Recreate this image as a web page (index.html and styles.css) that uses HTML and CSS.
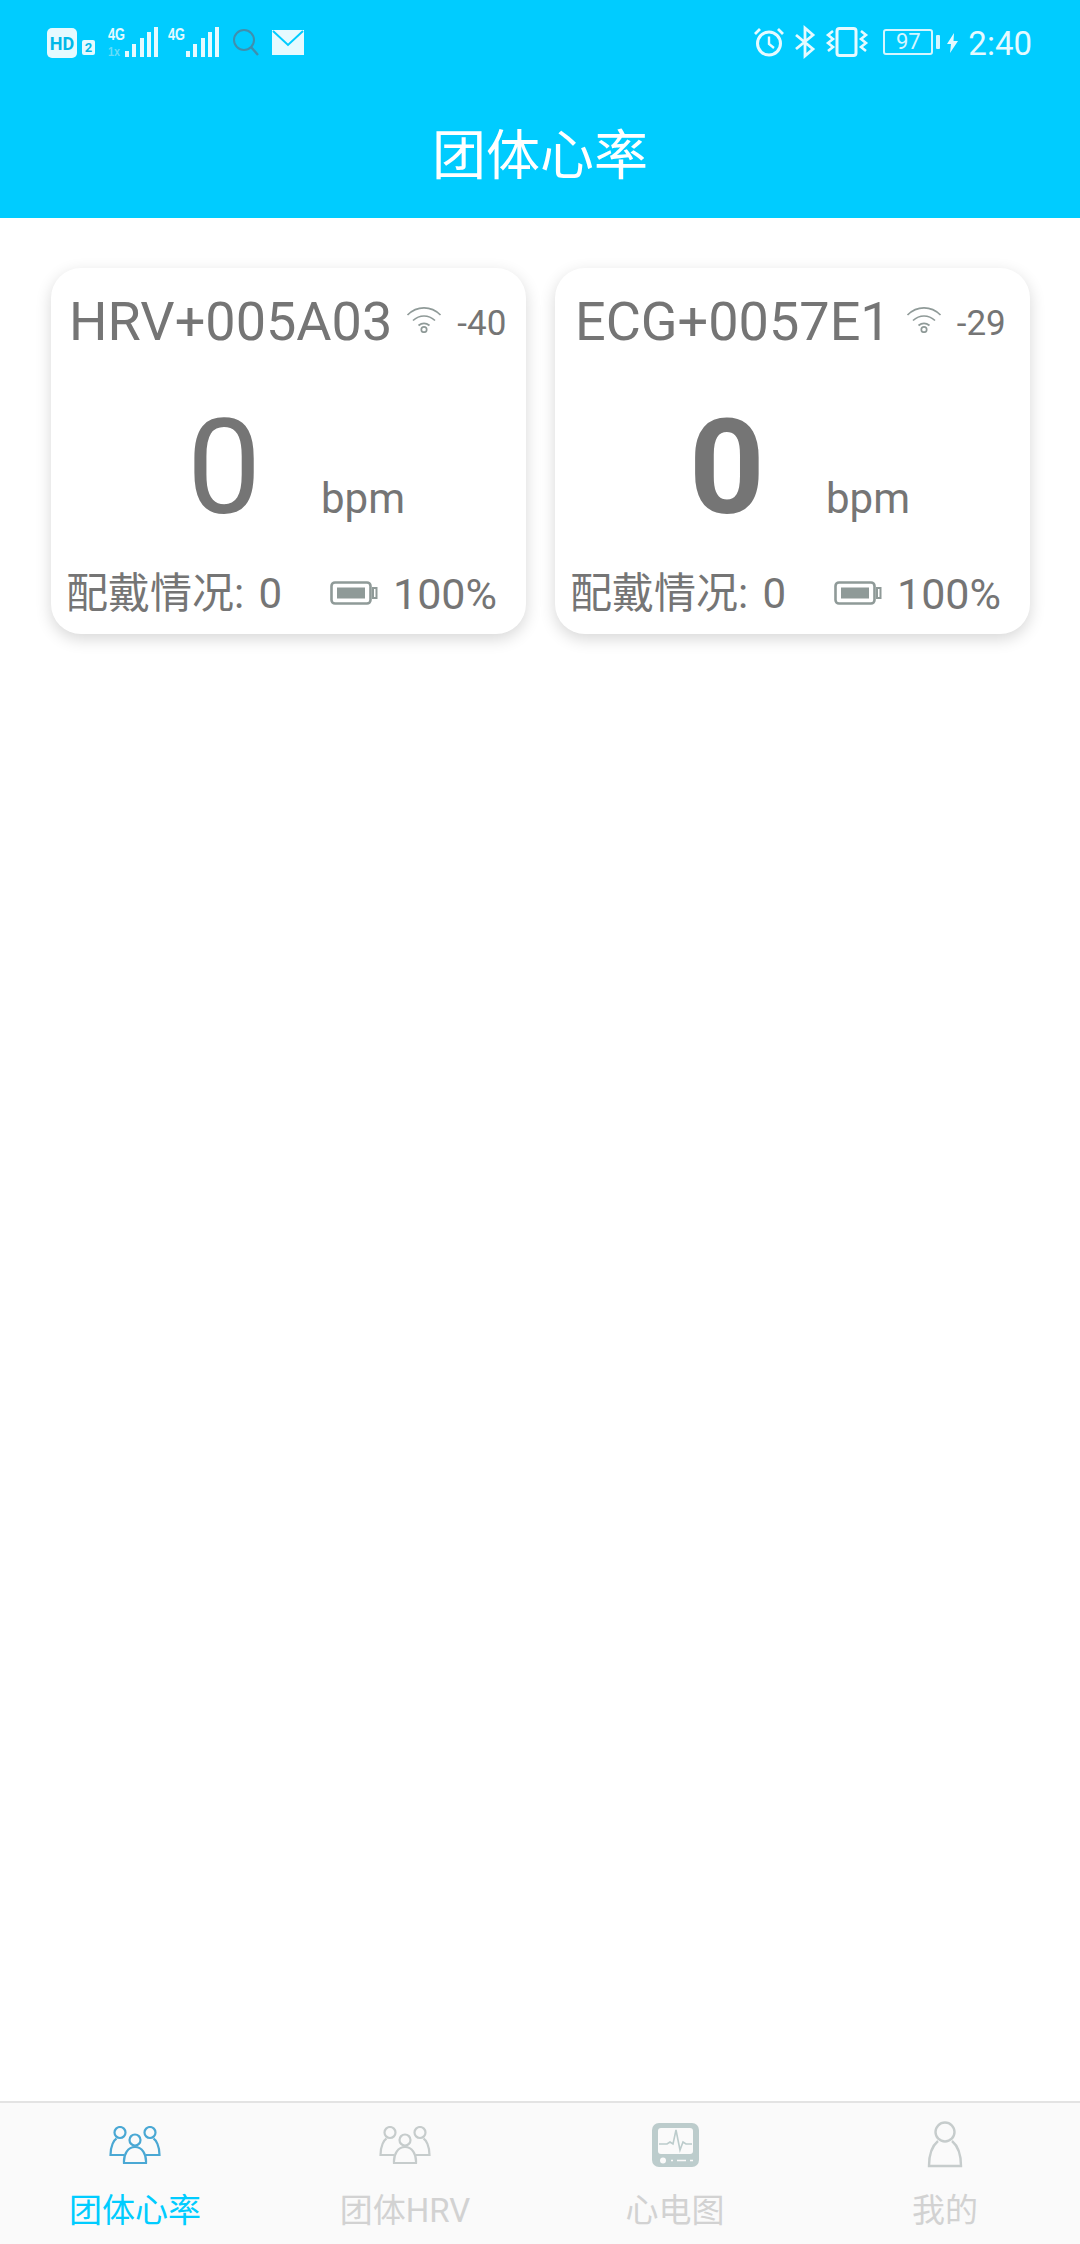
FILE: index.html
```html
<!DOCTYPE html>
<html lang="zh-CN">
<head>
<meta charset="utf-8">
<title>团体心率</title>
<link rel="stylesheet" href="styles.css">
</head>
<body>
<div class="app">
  <header class="header">
    <div class="statusbar">
      <div class="status-group left">
        <svg class="i-hd" viewBox="0 0 48 30" width="48" height="30"><rect x="0" y="0" width="30" height="30" rx="5" fill="#e6faff"/><text x="15" y="21.500" class="hd-text" text-anchor="middle">HD</text><rect x="35" y="12" width="13" height="15" rx="2" fill="#e6faff"/><text x="41.500" y="24" class="hd2-text" text-anchor="middle">2</text></svg>
        <svg class="i-sig first" viewBox="0 0 51 32" width="51" height="32"><text x="0" y="14" class="sig-text" textLength="17" lengthAdjust="spacingAndGlyphs">4G</text><text x="0" y="30" class="sig-faint" textLength="12" lengthAdjust="spacingAndGlyphs">1x</text><g fill="#e6faff"><rect x="17" y="25" width="4" height="6"/><rect x="24" y="18" width="4" height="13"/><rect x="32" y="12" width="4" height="19"/><rect x="39" y="6" width="4" height="25"/><rect x="46" y="1" width="4" height="30"/></g></svg>
        <svg class="i-sig second" viewBox="0 0 51 32" width="51" height="32"><text x="0" y="14" class="sig-text" textLength="17" lengthAdjust="spacingAndGlyphs">4G</text><g fill="#e6faff"><rect x="18" y="25" width="4" height="6"/><rect x="25" y="18" width="4" height="13"/><rect x="33" y="12" width="4" height="19"/><rect x="40" y="6" width="4" height="25"/><rect x="47" y="1" width="4" height="30"/></g></svg>
        <svg class="i-search" viewBox="0 0 27 29" width="27" height="29"><circle cx="12" cy="12" r="10" fill="none" stroke="#3f8fae" stroke-width="2"/><path d="M19 19l7 8" stroke="#3f8fae" stroke-width="2.400" fill="none"/></svg>
        <svg class="i-mail" viewBox="0 0 32 25" width="32" height="25"><rect width="32" height="25" fill="#e6faff"/><path d="M1 1l15 14L31 1" fill="none" stroke="#00ccff" stroke-width="2"/></svg>
      </div>
      <div class="status-group right">
        <svg class="i-alarm" viewBox="0 0 30 30" width="30" height="30"><circle cx="15" cy="16.500" r="11.500" fill="none" stroke="#e6faff" stroke-width="3"/><path d="M15 9.500v7.500l5 4" fill="none" stroke="#e6faff" stroke-width="2.400"/><path d="M1 7l5-5M29 7l-5-5" fill="none" stroke="#e6faff" stroke-width="2.800"/></svg>
        <svg class="i-bt" viewBox="0 0 20 32" width="20" height="32"><path d="M1 9l17 14-8 7V2l8 7L1 23" fill="none" stroke="#e6faff" stroke-width="2.800"/></svg>
        <svg class="i-vib" viewBox="0 0 42 30" width="42" height="30"><rect x="11" y="1.500" width="19" height="27" rx="2.500" fill="none" stroke="#e6faff" stroke-width="3"/><path d="M7 4L2 8l5 4-5 4 5 4-5 4M35 4l5 4-5 4 5 4-5 4 5 4" fill="none" stroke="#e6faff" stroke-width="2.600"/></svg>
        <div class="batt"><span class="batt-box">97</span><span class="batt-nub"></span></div>
        <svg class="i-bolt" viewBox="0 0 11 20" width="11" height="20"><path d="M7 0L0 11h4l-1 9 8-12H6.500z" fill="#e6faff"/></svg>
        <span class="time">2:40</span>
      </div>
    </div>
    <h1 class="title">团体心率</h1>
  </header>

  <main class="content">
    <section class="card card-a">
      <div class="card-top">
        <span class="dev-name">HRV+005A03</span>
        <svg class="wifi" viewBox="0 0 36 28" width="36" height="28"><path d="M1.500 10C11 .5 25 .5 34.500 10M7 15.500c6.500-6 15.500-6 22 0M12.500 20.500c3.500-2.800 7.500-2.800 11 0" fill="none" stroke="#8f9a98" stroke-width="1.700"/><circle cx="18" cy="24.500" r="2.700" fill="none" stroke="#8f9a98" stroke-width="1.700"/></svg>
        <span class="rssi">-40</span>
      </div>
      <div class="card-mid">
        <span class="rate">0</span>
        <span class="unit">bpm</span>
      </div>
      <div class="card-foot">
        <span class="wear">配戴情况: 0</span>
        <svg class="battery" viewBox="0 0 48 24" width="48" height="24"><rect x="1.500" y="1.500" width="39" height="21" rx="3.500" fill="none" stroke="#8f9a98" stroke-width="2.600"/><rect x="7" y="6.500" width="28" height="11" fill="#8f9a98"/><path d="M43 7h3.500v10H43z" fill="none" stroke="#8f9a98" stroke-width="2"/></svg>
        <span class="pct">100%</span>
      </div>
    </section>
    <section class="card card-b">
      <div class="card-top">
        <span class="dev-name">ECG+0057E1</span>
        <svg class="wifi" viewBox="0 0 36 28" width="36" height="28"><path d="M1.500 10C11 .5 25 .5 34.500 10M7 15.500c6.500-6 15.500-6 22 0M12.500 20.500c3.500-2.800 7.500-2.800 11 0" fill="none" stroke="#8f9a98" stroke-width="1.700"/><circle cx="18" cy="24.500" r="2.700" fill="none" stroke="#8f9a98" stroke-width="1.700"/></svg>
        <span class="rssi">-29</span>
      </div>
      <div class="card-mid">
        <span class="rate bold">0</span>
        <span class="unit">bpm</span>
      </div>
      <div class="card-foot">
        <span class="wear">配戴情况: 0</span>
        <svg class="battery" viewBox="0 0 48 24" width="48" height="24"><rect x="1.500" y="1.500" width="39" height="21" rx="3.500" fill="none" stroke="#8f9a98" stroke-width="2.600"/><rect x="7" y="6.500" width="28" height="11" fill="#8f9a98"/><path d="M43 7h3.500v10H43z" fill="none" stroke="#8f9a98" stroke-width="2"/></svg>
        <span class="pct">100%</span>
      </div>
    </section>
  </main>

  <nav class="tabbar">
    <div class="tab active">
      <div class="tab-slot"><svg viewBox="0 0 52 38" width="52" height="38"><g fill="none" stroke="#4aa8d4" stroke-width="2.200"><circle cx="11" cy="6.500" r="5.500"/><circle cx="41" cy="6.500" r="5.500"/><circle cx="26" cy="14" r="5.500"/><path d="M15 29H1.500c0-9 3.500-15 6-16.500M37 29h13.500c0-9-3.500-15-6-16.500"/><path d="M15 37c-.500-9 4-16 11-16s11.500 7 11 16z"/></g></svg></div>
      <span class="tab-label">团体心率</span>
    </div>
    <div class="tab">
      <div class="tab-slot"><svg viewBox="0 0 52 38" width="52" height="38"><g fill="none" stroke="#c6cccc" stroke-width="2.200"><circle cx="11" cy="6.500" r="5.500"/><circle cx="41" cy="6.500" r="5.500"/><circle cx="26" cy="14" r="5.500"/><path d="M15 29H1.500c0-9 3.500-15 6-16.500M37 29h13.500c0-9-3.500-15-6-16.500"/><path d="M15 37c-.500-9 4-16 11-16s11.500 7 11 16z"/></g></svg></div>
      <span class="tab-label">团体HRV</span>
    </div>
    <div class="tab">
      <div class="tab-slot"><svg viewBox="0 0 47 44" width="47" height="44"><rect width="47" height="44" rx="7" fill="#bccccc"/><rect x="6" y="5" width="35" height="26" rx="3" fill="#fafafa"/><path d="M7 21h8l3-2 3 2 3-14 4 20 3-8 3 2h6" fill="none" stroke="#bccccc" stroke-width="1.600"/><circle cx="11" cy="37.500" r="3" fill="#fafafa"/><path d="M19 37.500h2M25 37.500h9M38 37.500h3" stroke="#fafafa" stroke-width="1.600"/></svg></div>
      <span class="tab-label">心电图</span>
    </div>
    <div class="tab">
      <div class="tab-slot"><svg viewBox="0 0 36 47" width="36" height="47"><g fill="none" stroke="#c6cccc" stroke-width="2.400"><circle cx="18" cy="11" r="9.500"/><path d="M11 20C5 25 2 32 2 45h32c0-13-3-20-9-25"/></g></svg></div>
      <span class="tab-label">我的</span>
    </div>
  </nav>
</div>
</body>
</html>
```
FILE: styles.css
```css
* { box-sizing: border-box; }
html, body { margin: 0; padding: 0; }
body { background: #fff; font-family: Roboto, "Noto Sans CJK SC", sans-serif; }
.app { width: 1080px; height: 2244px; display: flex; flex-direction: column; overflow: hidden; }

.header { height: 218px; background: #00ccff; flex: none; }
.statusbar { height: 88px; padding: 26px 48px 0 47px; display: flex; justify-content: space-between; align-items: flex-start; }
.status-group { display: flex; align-items: flex-start; }
.status-group svg { display: block; flex: none; overflow: visible; }
.i-hd { margin-top: 2px; }
.i-sig.first { margin-left: 13px; }
.i-sig.second { margin-left: 9px; }
.i-search { margin: 2px 0 0 13px; }
.i-mail { margin: 4px 0 0 13px; }
.hd-text { font: 700 18px Roboto, sans-serif; fill: #00b8e8; }
.hd2-text { font: 700 13px Roboto, sans-serif; fill: #00b8e8; }
.sig-text { font: 700 17px "Liberation Sans", sans-serif; fill: #e6faff; }
.sig-faint { font: 700 12px "Liberation Sans", sans-serif; fill: #66dcf8; }
.i-alarm { margin-top: 1px; }
.i-bt { margin: 0 0 0 11px; }
.i-vib { margin: 1px 0 0 11px; }
.batt { display: flex; align-items: center; margin: 3px 0 0 15px; height: 26px; }
.batt-box { width: 50px; height: 26px; border: 2px solid #d5f6ff; border-radius: 3px; font-size: 22px; line-height: 22px; text-align: center; color: #d5f6ff; }
.batt-nub { width: 4px; height: 14px; margin-left: 3px; background: #d5f6ff; border-radius: 1px; }
.i-bolt { margin: 7px 0 0 7px; }
.time { margin: -2px 0 0 10px; font-size: 33px; line-height: 40px; color: #e6faff; }
.title { margin: 0; font-size: 54px; line-height: 130px; font-weight: 400; color: #fff; text-align: center; padding-top: 4px; height: 130px; }

.content { flex: 1; padding: 50px 51px 0; display: grid; grid-template-columns: 475px 475px; column-gap: 29px; align-content: start; }
.card { height: 366px; background: #fff; border-radius: 30px; box-shadow: 0 5px 16px rgba(0,0,0,.16); color: #757575; display: flex; flex-direction: column; }
.card-top { display: flex; align-items: flex-start; height: 115px; padding-top: 22px; }
.dev-name { font-size: 54px; line-height: 64px; white-space: nowrap; }
.wifi { flex: none; margin: 15px 0 0 15px; display: block; }
.rssi { font-size: 35px; line-height: 40px; margin: 14px 0 0 15px; }
.card-a .card-top { padding-left: 18px; }
.card-a .wifi { margin-left: 14px; }
.card-b .card-top { padding-left: 20px; }
.card-mid { display: flex; align-items: baseline; height: 183px; }
.card-a .card-mid { padding-left: 136px; }
.card-b .card-mid { padding-left: 134px; }
.rate { font-size: 132px; line-height: 170px; width: 134px; }
.rate.bold { font-weight: 700; width: 137px; }
.unit { font-size: 42px; }
.card-foot { display: flex; align-items: flex-start; padding-left: 15px; }
.wear { font-size: 42px; line-height: 56px; width: 264px; white-space: nowrap; word-spacing: 4px; }
.battery { display: block; flex: none; margin-top: 15px; overflow: visible; }
.pct { font-size: 43px; line-height: 56px; margin-left: 15px; }

.tabbar { flex: none; height: 143px; background: #fafafa; border-top: 2px solid #e3e3e3; display: grid; grid-template-columns: repeat(4, 270px); }
.tab { display: flex; flex-direction: column; align-items: center; color: #d2d2d2; padding-top: 18px; }
.tab.active { color: #00ccff; }
.tab-slot { height: 47px; display: flex; align-items: center; justify-content: center; }
.tab-slot svg { display: block; }
.tab-label { font-size: 33px; line-height: 40px; margin-top: 23px; white-space: nowrap; }
```
